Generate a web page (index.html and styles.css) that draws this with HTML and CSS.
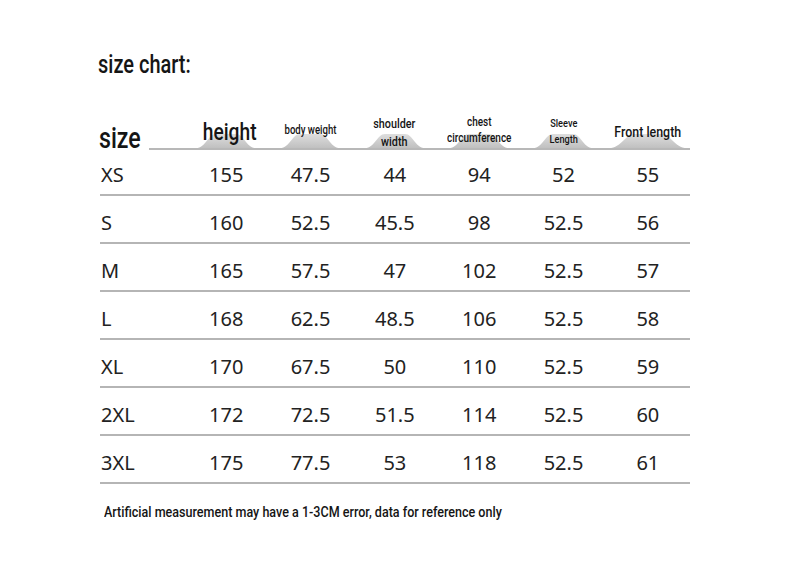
FILE: index.html
```html
<!DOCTYPE html>
<html>
<head>
<meta charset="utf-8">
<link rel="stylesheet" href="styles.css">
</head>
<body>
<div class="page">
  <h1 class="title"><span class="cond">size chart:</span></h1>
  <div class="chart">
    <div class="head">
      <div class="hcell first"><span class="size-label cond">size</span><span class="rule"></span></div>
      <div class="hcell"><svg class="bump" viewBox="0 0 60 16" preserveAspectRatio="none"><defs><linearGradient id="g1" x1="0" y1="0" x2="0" y2="1"><stop offset="0" stop-color="#dedede"/><stop offset="1" stop-color="#c0c0c0"/></linearGradient></defs><path d="M0 16 C10 16 12 1 20 1 L40 1 C48 1 50 16 60 16 Z" fill="url(#g1)"/></svg><span class="ht cond h-height">height</span></div>
      <div class="hcell"><svg class="bump" viewBox="0 0 60 16" preserveAspectRatio="none"><path d="M0 16 C10 16 12 1 20 1 L40 1 C48 1 50 16 60 16 Z" fill="url(#g1)"/></svg><span class="ht cond h-body">body weight</span></div>
      <div class="hcell"><svg class="bump" viewBox="0 0 60 16" preserveAspectRatio="none"><path d="M0 16 C10 16 12 1 20 1 L40 1 C48 1 50 16 60 16 Z" fill="url(#g1)"/></svg><span class="ht cond h-shoulder">shoulder<br>width</span></div>
      <div class="hcell"><svg class="bump" viewBox="0 0 60 16" preserveAspectRatio="none"><path d="M0 16 C10 16 12 1 20 1 L40 1 C48 1 50 16 60 16 Z" fill="url(#g1)"/></svg><span class="ht cond h-chest">chest<br>circumference</span></div>
      <div class="hcell"><svg class="bump" viewBox="0 0 60 16" preserveAspectRatio="none"><path d="M0 16 C10 16 12 1 20 1 L40 1 C48 1 50 16 60 16 Z" fill="url(#g1)"/></svg><span class="ht cond h-sleeve">Sleeve<br>Length</span></div>
      <div class="hcell"><svg class="bump wide" viewBox="0 0 60 16" preserveAspectRatio="none"><path d="M0 16 C10 16 12 1 20 1 L40 1 C48 1 50 16 60 16 Z" fill="url(#g1)"/></svg><span class="ht cond h-front">Front length</span></div>
    </div>
    <div class="row"><span class="c s">XS</span><span class="c">155</span><span class="c">47.5</span><span class="c">44</span><span class="c">94</span><span class="c">52</span><span class="c">55</span></div>
    <div class="row"><span class="c s">S</span><span class="c">160</span><span class="c">52.5</span><span class="c">45.5</span><span class="c">98</span><span class="c">52.5</span><span class="c">56</span></div>
    <div class="row"><span class="c s">M</span><span class="c">165</span><span class="c">57.5</span><span class="c">47</span><span class="c">102</span><span class="c">52.5</span><span class="c">57</span></div>
    <div class="row"><span class="c s">L</span><span class="c">168</span><span class="c">62.5</span><span class="c">48.5</span><span class="c">106</span><span class="c">52.5</span><span class="c">58</span></div>
    <div class="row"><span class="c s">XL</span><span class="c">170</span><span class="c">67.5</span><span class="c">50</span><span class="c">110</span><span class="c">52.5</span><span class="c">59</span></div>
    <div class="row"><span class="c s">2XL</span><span class="c">172</span><span class="c">72.5</span><span class="c">51.5</span><span class="c">114</span><span class="c">52.5</span><span class="c">60</span></div>
    <div class="row"><span class="c s">3XL</span><span class="c">175</span><span class="c">77.5</span><span class="c">53</span><span class="c">118</span><span class="c">52.5</span><span class="c">61</span></div>
  </div>
  <p class="note"><span class="cond">Artificial measurement may have a 1-3CM error, data for reference only</span></p>
</div>
</body>
</html>
```

FILE: styles.css
```css
html, body {
  margin: 0;
  padding: 0;
  background: #ffffff;
}
.page {
  padding: 50px 0 0 100px;
  width: 590px;
  color: #151515;
}
.cond {
  display: inline-block;
  font-family: Roboto, "DejaVu Sans Condensed", sans-serif;
  font-weight: 500;
  transform: scaleX(0.8);
  white-space: nowrap;
}
.title {
  margin: 0 0 0 -2px;
  font-weight: normal;
  font-size: 25px;
  line-height: 30px;
}
.title .cond {
  transform-origin: left center;
}
.chart {
  margin-top: 34px;
  width: 590px;
}
.head {
  display: grid;
  grid-template-columns: 84px repeat(6, 1fr);
  height: 33px;
  margin-bottom: 1px;
}
.hcell {
  position: relative;
  display: flex;
  align-items: flex-end;
  justify-content: center;
  border-bottom: 2px solid #b8b8b8;
  text-align: center;
  color: #151515;
}
.hcell.first {
  border-bottom: none;
  justify-content: flex-start;
}
.size-label {
  font-size: 29px;
  line-height: 30px;
  margin-bottom: -3px;
  margin-left: -1px;
  margin-right: -9px;
  transform-origin: left center;
}
.rule {
  flex: 1;
  margin-left: 7px;
  border-bottom: 2px solid #b8b8b8;
}
.bump {
  position: absolute;
  bottom: 0;
  left: 50%;
  width: 60px;
  height: 15px;
  margin-left: -30px;
}
.bump.wide {
  width: 78px;
  margin-left: -39px;
}
.ht {
  position: relative;
}
.h-height {
  font-size: 24px;
  line-height: 26px;
  margin-bottom: 3px;
  margin-left: 6px;
}
.h-body {
  font-size: 12px;
  line-height: 14px;
  margin-bottom: 11px;
}
.h-shoulder {
  font-size: 13.5px;
  line-height: 18px;
  margin-bottom: -2px;
}
.h-chest {
  font-size: 12.5px;
  line-height: 16px;
  margin-bottom: 2px;
}
.h-sleeve {
  font-size: 11.5px;
  line-height: 16px;
  margin-bottom: 1px;
}
.h-front {
  font-size: 15.5px;
  line-height: 16px;
  margin-bottom: 8px;
}
.row {
  display: grid;
  grid-template-columns: 84px repeat(6, 1fr);
  height: 48px;
  box-sizing: border-box;
  padding-top: 7px;
  align-items: center;
  border-bottom: 2px solid #b5b5b5;
  font-family: "Noto Sans", sans-serif;
  font-size: 20px;
  color: #222222;
}
.c {
  text-align: center;
}
.c.s {
  text-align: left;
  padding-left: 1px;
}
.note {
  margin: 19px 0 0 4px;
  font-size: 15.5px;
  line-height: 18px;
  color: #151515;
}
.note .cond {
  transform-origin: left center;
  transform: scaleX(0.81);
}
```
